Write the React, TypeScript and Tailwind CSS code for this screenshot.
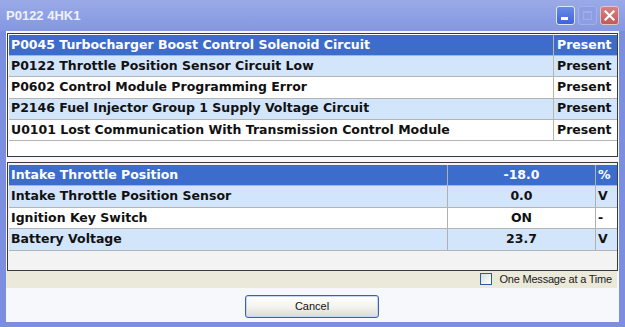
import React from 'react';

const dtcs = [
  { text: 'P0045 Turbocharger Boost Control Solenoid Circuit', status: 'Present' },
  { text: 'P0122 Throttle Position Sensor Circuit Low', status: 'Present' },
  { text: 'P0602 Control Module Programming Error', status: 'Present' },
  { text: 'P2146 Fuel Injector Group 1 Supply Voltage Circuit', status: 'Present' },
  { text: 'U0101 Lost Communication With Transmission Control Module', status: 'Present' },
];

const params = [
  { name: 'Intake Throttle Position', value: '-18.0', unit: '%' },
  { name: 'Intake Throttle Position Sensor', value: '0.0', unit: 'V' },
  { name: 'Ignition Key Switch', value: 'ON', unit: '-' },
  { name: 'Battery Voltage', value: '23.7', unit: 'V' },
];

// selected, light, white, light, white
const rowBg = [
  'bg-[#3d6dcc] text-white',
  'bg-[#d3e5fb] text-[#111]',
  'bg-white text-[#111]',
  'bg-[#d3e5fb] text-[#111]',
  'bg-white text-[#111]',
];

function TitleButtons() {
  return (
    <div className="flex items-center gap-[3px] pr-[1px]">
      <div className="w-[19px] h-[19px] rounded-[3px] border border-[#dfe6fb] bg-gradient-to-b from-[#6a8ae8] to-[#3f63d8] flex items-end pl-[4px] pb-[4px]">
        <div className="w-[7px] h-[3px] bg-white" />
      </div>
      <div className="w-[19px] h-[19px] rounded-[3px] border border-[#a3b1ea] bg-[#8d9ee4] flex items-center justify-center">
        <div className="w-[9px] h-[9px] border border-[#a0aee8] border-t-[2px]" />
      </div>
      <div className="w-[19px] h-[19px] rounded-[3px] border border-[#e6c4c4] bg-gradient-to-b from-[#d98080] to-[#c05a5a] flex items-center justify-center">
        <svg width="11" height="11" viewBox="0 0 11 11">
          <path d="M1.5 1.5 L9.5 9.5 M9.5 1.5 L1.5 9.5" stroke="white" strokeWidth="2.2" strokeLinecap="square" />
        </svg>
      </div>
    </div>
  );
}

export default function App() {
  return (
    <div className="w-[625px] h-[327px] bg-[#7c8edf] flex flex-col overflow-hidden font-['DejaVu_Sans',sans-serif]">
      {/* title bar */}
      <div className="h-[31px] flex items-center justify-between pl-[6px] pr-[5px] bg-gradient-to-b from-[#9aaae8] to-[#8497e0]">
        <span className="font-['Liberation_Sans',sans-serif] font-bold text-[13px] text-white/85">
          P0122 4HK1
        </span>
        <TitleButtons />
      </div>

      {/* client area */}
      <div className="flex-1 mx-[6px] bg-[#f7f8fb] flex flex-col">
        {/* DTC table */}
        <div className="mt-[2px] ml-[1px] w-[611px] border border-[#3a3a3a] pl-[1px] pt-[1px] bg-white flex flex-col">
          {dtcs.map((d, i) => (
            <div key={d.text} className={`h-[21.2px] flex border-b border-[#b4b4b4] text-[12.5px] font-bold leading-none ${rowBg[i]}`}>
              <div className="flex-1 flex items-center pl-[2px] whitespace-nowrap">{d.text}</div>
              <div className="w-[64px] flex items-center pl-[3px] border-l border-[#bcb6a4]">{d.status}</div>
            </div>
          ))}
          <div className="h-[15px] bg-white" />
        </div>

        {/* parameter table */}
        <div className="mt-[5px] ml-[1px] w-[611px] border border-[#3a3a3a] pl-[1px] pt-[2px] bg-[#f3f3f4] flex flex-col">
          {params.map((p, i) => (
            <div key={p.name} className={`h-[21.5px] flex border-b border-[#b4b4b4] text-[12.5px] font-bold leading-none ${rowBg[i]}`}>
              <div className="w-[438px] flex items-center pl-[2px] whitespace-nowrap">{p.name}</div>
              <div className="w-[148px] flex items-center justify-center border-l border-[#b0b0b0]">{p.value}</div>
              <div className="flex-1 flex items-center pl-[2px] border-l border-[#b0b0b0]">{p.unit}</div>
            </div>
          ))}
          <div className="h-[19px]" />
        </div>

        {/* option strip */}
        <div className="h-[17px] w-[611px] bg-[#ebe9d9] flex items-center justify-end pr-[5px] gap-[7px]">
          <div className="w-[12px] h-[12px] border border-[#2b5aa8] bg-gradient-to-br from-[#dcdcd6] to-[#ffffff]" />
          <span className="font-['Liberation_Sans',sans-serif] text-[11px] text-[#1a1a1a] tracking-[-0.2px]">
            One Message at a Time
          </span>
        </div>

        {/* buttons */}
        <div className="flex-1 flex justify-center pt-[7px] pr-[1px]">
          <button className="w-[134px] h-[23px] rounded-[3px] border border-[#3b5fb3] bg-gradient-to-b from-[#ffffff] via-[#f4f3ee] to-[#dcdad0] shadow-[inset_0_0_0_1px_#c6d6f4] font-['Liberation_Sans',sans-serif] text-[11px] text-[#111]">
            Cancel
          </button>
        </div>
      </div>

      <div className="h-[5px]" />
    </div>
  );
}
